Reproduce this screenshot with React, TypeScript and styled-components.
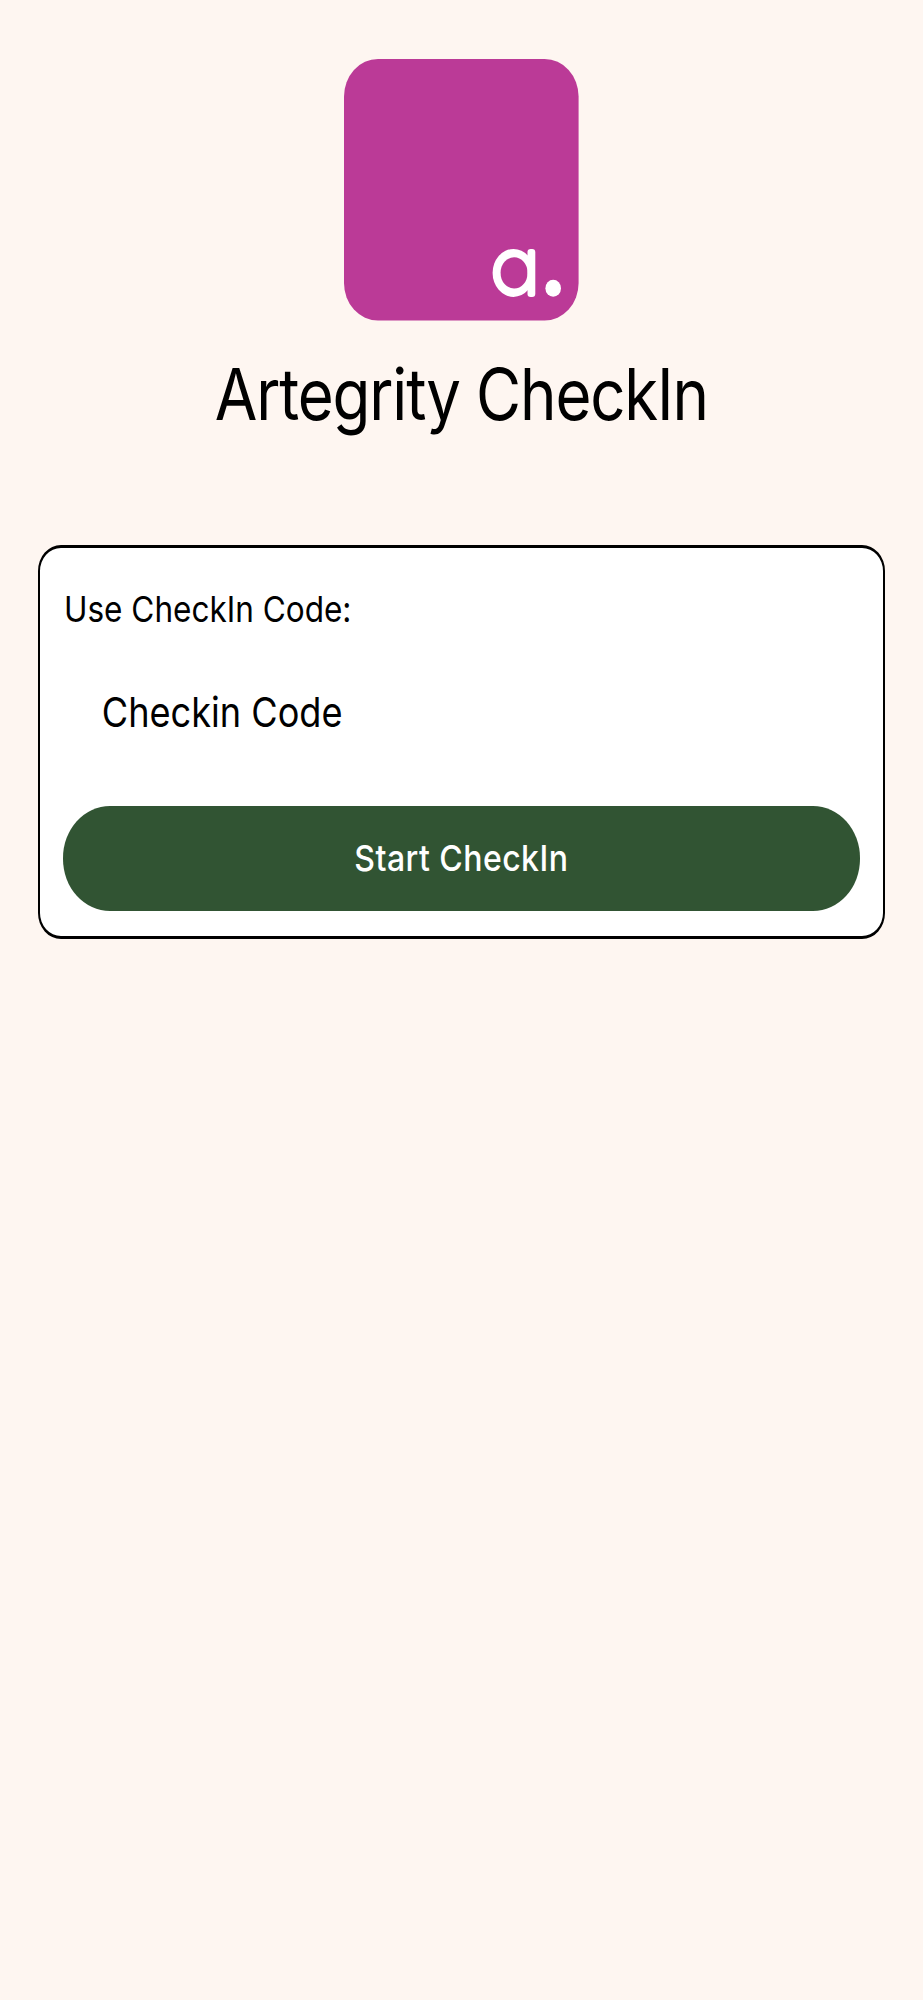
import { useState } from "react";
import styled, { createGlobalStyle } from "styled-components";

const App = () => {
  // state -----------
  const [code, setCode] = useState<string>("");

  return (
    <>
      <GlobalStyle />
      <PageStyled>
        <Logo />
        <TitleStyled>
          <Condensed $ratio={0.87}>Artegrity CheckIn</Condensed>
        </TitleStyled>
        <CardStyled onSubmit={(event) => event.preventDefault()}>
          <LabelStyled htmlFor="code">
            <Condensed $ratio={0.876}>Use CheckIn Code:</Condensed>
          </LabelStyled>
          <InputStyled
            id="code"
            type="text"
            placeholder="Checkin Code"
            value={code}
            onChange={(e) => setCode(e.target.value)}
          />
          <ButtonStyled type="submit">
            <Condensed $ratio={0.89}>Start CheckIn</Condensed>
          </ButtonStyled>
        </CardStyled>
      </PageStyled>
    </>
  );
};

const Logo = () => (
  <LogoStyled viewBox="0 0 234.6 261.6">
    <rect width="234.6" height="261.6" rx="34" ry="37.5" fill="#bb3a97" />
    <ellipse cx="169.5" cy="213.9" rx="20.9" ry="24" fill="#fff" />
    <ellipse cx="170.1" cy="213.9" rx="13.5" ry="15.6" fill="#bb3a97" />
    <rect x="183.5" y="189.9" width="7.8" height="48" rx="3.2" fill="#fff" />
    <ellipse cx="209.2" cy="229.2" rx="7.8" ry="8.5" fill="#fff" />
  </LogoStyled>
);

const GlobalStyle = createGlobalStyle`
  * {
    box-sizing: border-box;
  }

  body {
    margin: 0;
    background-color: #fef6f1;
    font-family: Inter, "Liberation Sans", sans-serif;
    color: #000;
  }
`;

const PageStyled = styled.main`
  display: flex;
  flex-direction: column;
  align-items: center;
  min-height: 2000px;
  padding: 59px 38px 0;
`;

const LogoStyled = styled.svg`
  display: block;
  width: 234.6px;
  height: 261.6px;
`;

const Condensed = styled.span<{ $ratio: number }>`
  display: inline-block;
  white-space: nowrap;
  transform: scaleX(${({ $ratio }) => $ratio});
`;

const TitleStyled = styled.h1`
  margin: 33.4px 0 0;
  font-size: 71px;
  font-weight: 400;
  line-height: 80px;
  letter-spacing: -1.35px;
`;

const CardStyled = styled.form`
  display: flex;
  flex-direction: column;
  align-items: flex-start;
  width: 847px;
  height: 394px;
  margin-top: 111px;
  padding: 39px 23px 0;
  background-color: #fff;
  border: solid #000;
  border-width: 3px 2px;
  border-radius: 23px / 26px;
`;

const LabelStyled = styled.label`
  padding-left: 1px;
  font-size: 36px;
  line-height: 44px;

  span {
    transform-origin: left;
  }
`;

const InputStyled = styled.input`
  width: 796px;
  height: 104px;
  margin-top: 29px;
  padding: 0 44px;
  border: none;
  outline: none;
  background: transparent;
  font-family: inherit;
  font-size: 41px;
  color: #000;
  transform: scaleX(0.881);
  transform-origin: left;

  &::placeholder {
    color: #000;
    opacity: 1;
  }
`;

const ButtonStyled = styled.button`
  display: flex;
  justify-content: center;
  align-items: center;
  width: 797px;
  height: 105px;
  margin-top: 42px;
  padding: 0;
  border: none;
  border-radius: 47px / 52px;
  background-color: #315433;
  font-family: inherit;
  font-size: 36px;
  font-weight: 500;
  letter-spacing: 0.5px;
  color: #fff;
`;

export default App;
